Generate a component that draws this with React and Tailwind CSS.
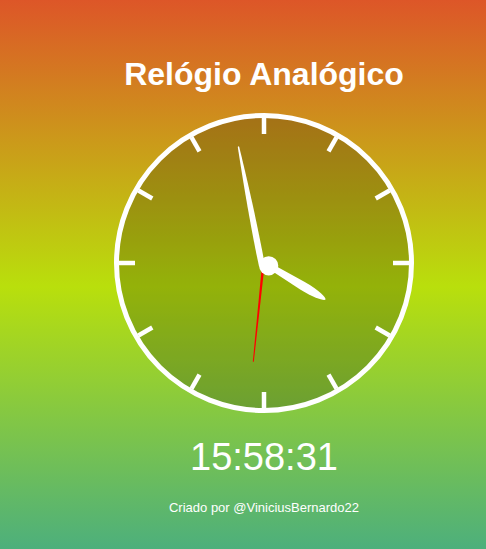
// Relógio analógico estático (15:58:31) com fundo em degradê.
const ORIGEM = { x: 114, y: 113 }; // canto do svg na página

const TICKS = Array.from({ length: 12 }, (_, i) => i * 30);

// ponteiro desenhado "para cima" e girado de base até a ponta
function Ponteiro({ base, ponta, forma, cor = "#fff" }) {
  const bx = base[0] - ORIGEM.x;
  const by = base[1] - ORIGEM.y;
  const dx = ponta[0] - base[0];
  const dy = ponta[1] - base[1];
  const len = Math.hypot(dx, dy);
  const ang = (Math.atan2(dx, -dy) * 180) / Math.PI;
  return <path d={forma(len)} fill={cor} transform={`translate(${bx} ${by}) rotate(${ang})`} />;
}

const formaMinuto = (l) =>
  `M -3 0 C -3.8 ${-l * 0.35} -1.8 ${-l * 0.8} -0.7 ${-l + 1} Q 0 ${-l - 0.6} 0.7 ${-l + 1} C 1.8 ${-l * 0.8} 3.8 ${-l * 0.35} 3 0 Z`;

const formaHora = (l) =>
  `M -2.8 0 L -4.4 ${-l * 0.6} C -4.8 ${-l * 0.85} -1.8 ${-l} 0 ${-l} C 1.8 ${-l} 4.8 ${-l * 0.85} 4.4 ${-l * 0.6} L 2.8 0 Z`;

const formaSegundo = (l) => `M -1.3 0 L -0.5 ${-l} L 0.5 ${-l} L 1.3 0 Z`;

function Relogio() {
  return (
    <svg width="300" height="300" viewBox="0 0 300 300" className="mt-[23px] block">
      <circle cx="150" cy="150" r="147.5" fill="rgba(0,0,0,0.2)" stroke="#fff" strokeWidth="5" />
      {TICKS.map((a) => (
        <line
          key={a}
          x1="150"
          y1="5"
          x2="150"
          y2="21"
          stroke="#fff"
          strokeWidth="4.5"
          transform={`rotate(${a} 150 150)`}
        />
      ))}
      <Ponteiro base={[263.5, 263]} ponta={[253.3, 361.7]} forma={formaSegundo} cor="#ff0000" />
      <Ponteiro base={[262, 266]} ponta={[238.3, 146]} forma={formaMinuto} />
      <Ponteiro base={[268, 265]} ponta={[325.5, 299.5]} forma={formaHora} />
      <circle cx={268.7 - ORIGEM.x} cy={265.8 - ORIGEM.y} r="9.6" fill="#fff" />
    </svg>
  );
}

export default function App() {
  return (
    <div
      className="min-h-[549px] w-full bg-[linear-gradient(180deg,#dd5628_0%,#b9df0c_52%,#4caf7d_100%)] text-white"
      style={{ fontFamily: '"Liberation Sans", Arial, sans-serif' }}
    >
      <div className="flex flex-col items-center pl-[42px] pt-[58px] pb-[37px]">
        <h1 className="h-[32px] text-[32px] font-bold leading-none whitespace-nowrap">Relógio Analógico</h1>
        <Relogio />
        <div className="mt-[25px] h-[38px] text-[38px] leading-none">15:58:31</div>
        <p className="mt-[25px] text-[13px] leading-none">Criado por @ViniciusBernardo22</p>
      </div>
    </div>
  );
}
